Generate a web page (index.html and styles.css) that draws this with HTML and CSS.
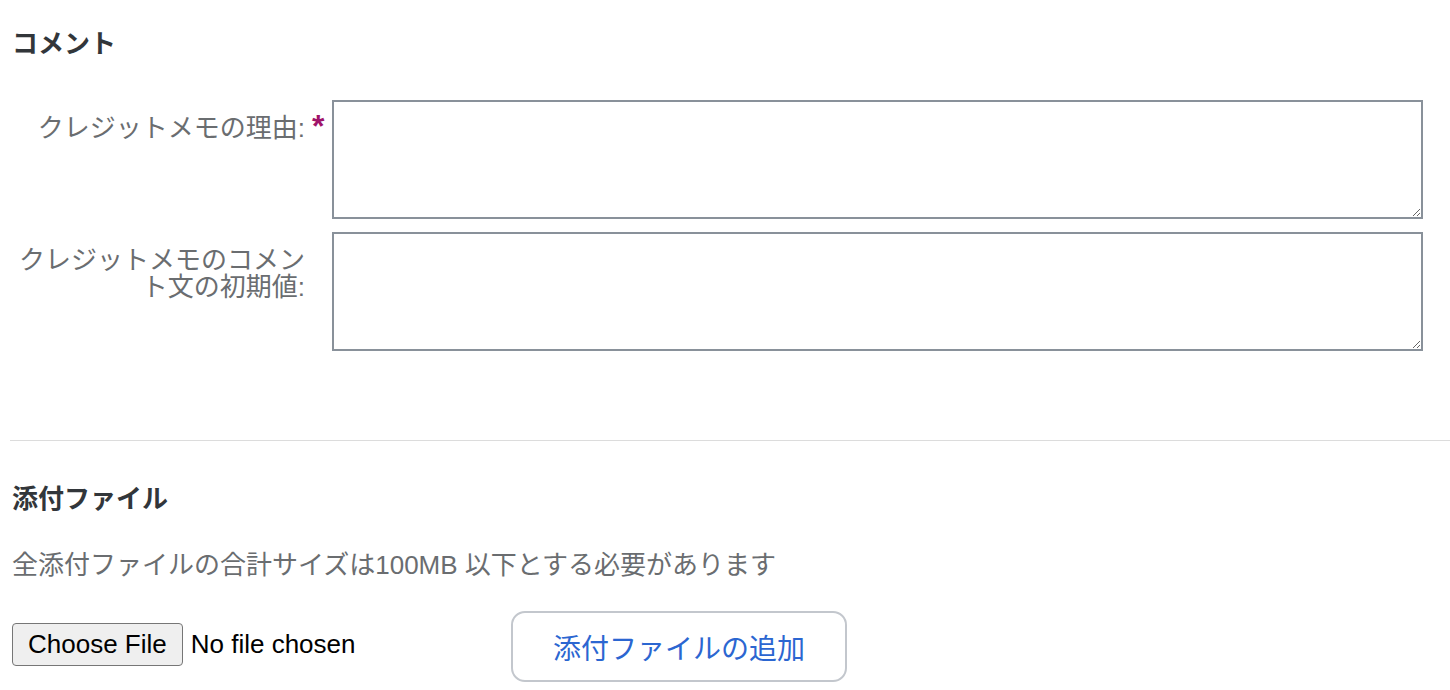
FILE: index.html
```html
<!DOCTYPE html>
<html lang="ja">
<head>
<meta charset="utf-8">
<title>コメント</title>
<link rel="stylesheet" href="styles.css">
</head>
<body>
<div class="page">
  <section class="section comments">
    <h2 class="section-title">コメント</h2>
    <div class="form">
      <div class="form-row">
        <label class="form-label" for="reason">クレジットメモの理由:<span class="req"><span class="req-mark">*</span></span></label>
        <textarea id="reason" class="form-textarea"></textarea>
      </div>
      <div class="form-row">
        <label class="form-label" for="comment">クレジットメモのコメント文の初期値:</label>
        <textarea id="comment" class="form-textarea"></textarea>
      </div>
    </div>
  </section>
  <hr class="divider">
  <section class="section attachments">
    <h2 class="section-title">添付ファイル</h2>
    <p class="hint">全添付ファイルの合計サイズは100MB 以下とする必要があります</p>
    <div class="file-row">
      <input type="file" class="file-input">
      <button type="button" class="add-btn">添付ファイルの追加</button>
    </div>
  </section>
</div>
</body>
</html>
```

FILE: styles.css
```css
html, body {
  margin: 0;
  padding: 0;
  background: #ffffff;
}

body {
  font-family: "Liberation Sans", "Noto Sans CJK JP", sans-serif;
  font-size: 26px;
  color: #32363a;
}

.page {
  padding-left: 10px;
}

.section {
  padding-left: 2px;
}

.section-title {
  margin: 0;
  font-size: 26px;
  line-height: 30px;
  font-weight: bold;
  color: #32363a;
}

.comments .section-title {
  margin-top: 29px;
}

.form {
  display: flex;
  flex-direction: column;
  gap: 13px;
  margin-top: 41px;
}

.form-row {
  display: flex;
  align-items: flex-start;
}

.form-label {
  box-sizing: border-box;
  width: 320px;
  flex: none;
  padding: 15px 27px 0 0;
  text-align: right;
  color: #6a6d70;
  font-size: 26px;
  line-height: 27px;
}

.req {
  display: inline-block;
  width: 0;
  white-space: nowrap;
  text-align: left;
  line-height: 0;
}

.req-mark {
  margin-left: 7px;
  color: #a0136a;
  font-weight: bold;
  font-size: 32px;
  line-height: 0;
}

.form-textarea {
  box-sizing: border-box;
  width: 1091px;
  height: 119px;
  margin: 0;
  border: 2px solid #89919a;
  border-radius: 0;
  background: #fff;
  font-family: inherit;
  font-size: 26px;
  padding: 6px 8px;
}

.divider {
  margin: 89px 0 0 0;
  border: 0;
  border-top: 1px solid #dcdcdc;
  height: 0;
}

.attachments .section-title {
  margin-top: 43px;
}

.hint {
  margin: 36px 0 0 0;
  font-size: 26px;
  line-height: 30px;
  color: #6a6d70;
}

.file-row {
  display: flex;
  align-items: flex-start;
  margin-top: 31px;
}

.file-input {
  width: 499px;
  margin: 12px 0 0 0;
  font-family: "Liberation Sans", sans-serif;
  font-size: 26px;
  color: #000;
}

.file-input::file-selector-button {
  box-sizing: border-box;
  height: 43px;
  margin-right: 8px;
  padding: 0 15px;
  font-family: "Liberation Sans", sans-serif;
  font-size: 26px;
  color: #000;
  background: #efefef;
  border: 1.5px solid #767676;
  border-radius: 4px;
}

.add-btn {
  box-sizing: border-box;
  width: 336px;
  height: 71px;
  margin: 0;
  padding: 0;
  background: #fff;
  border: 2px solid #c3c7cd;
  border-radius: 14px;
  font-family: "Noto Sans CJK JP", "Liberation Sans", sans-serif;
  font-size: 28px;
  color: #2b66d1;
  cursor: pointer;
}
```
